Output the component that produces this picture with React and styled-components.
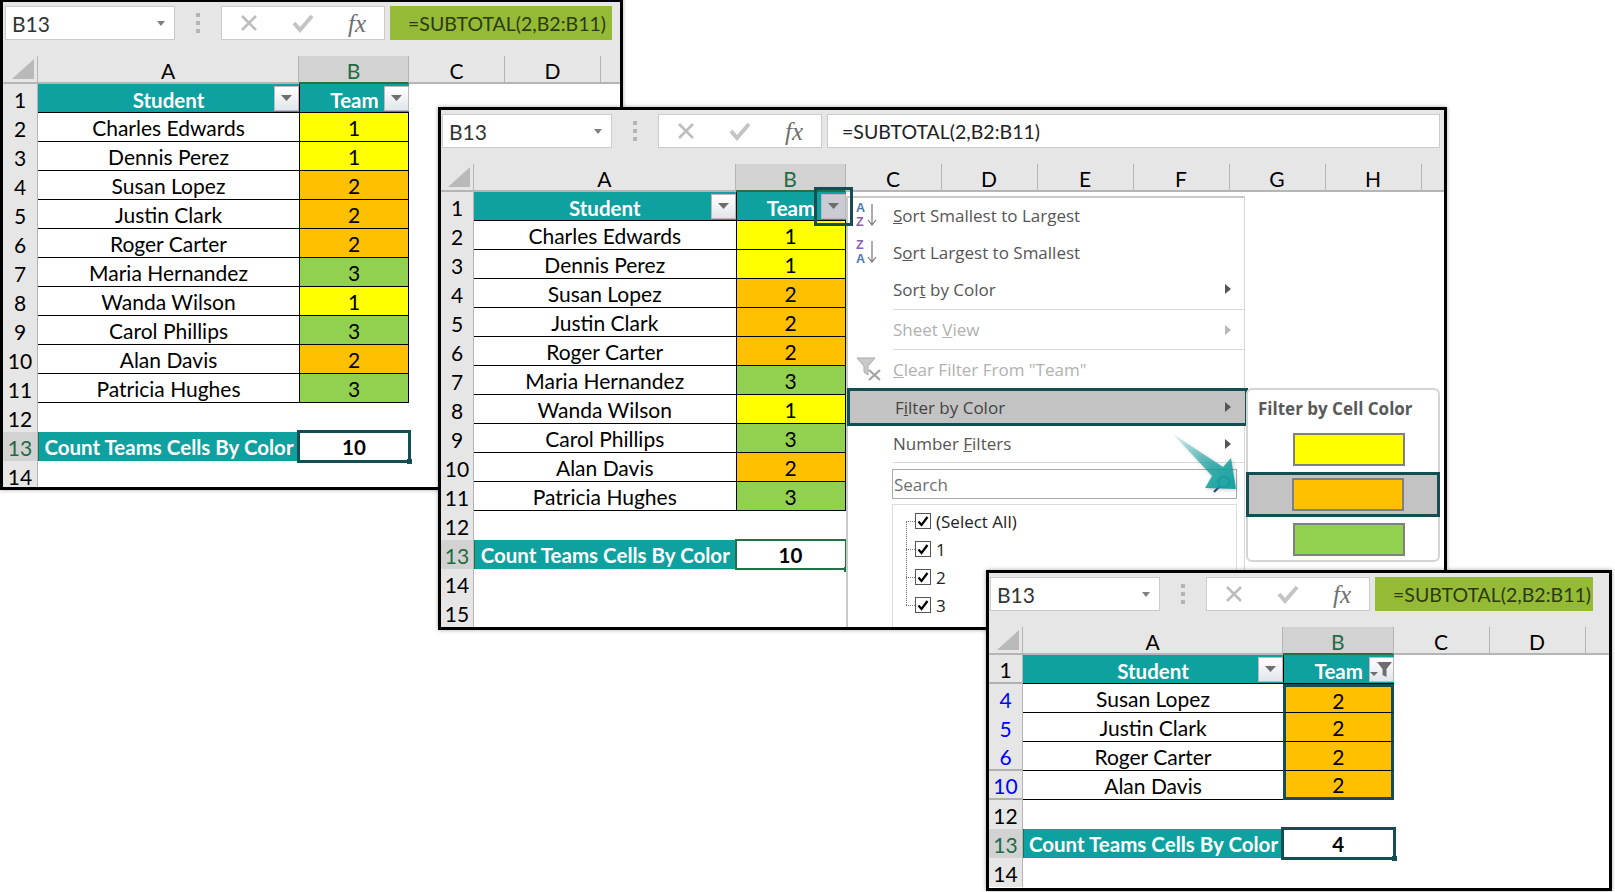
import React from "react";
import styled, { createGlobalStyle, css } from "styled-components";

const TEAL = "#0ea19f";
const DARK = "#134f52";
const TEAM_COLORS = { 1: "#ffff00", 2: "#ffc000", 3: "#92d050" };
const CELL_FONT = `"Lato", "Liberation Sans", sans-serif`;
const UI_FONT = `"Open Sans", "Noto Sans", sans-serif`;

const Global = createGlobalStyle`
  html, body { margin: 0; padding: 0; background: #fff; overflow: hidden; }
  * { box-sizing: border-box; }
`;

const Page = styled.main`
  position: relative;
  width: 1615px;
  height: 892px;
  background: #fff;
  overflow: hidden;
  font-family: ${CELL_FONT};
`;

const Window = styled.section`
  position: absolute;
  left: ${(p) => p.$x}px;
  top: ${(p) => p.$y}px;
  width: ${(p) => p.$w}px;
  height: ${(p) => p.$h}px;
  z-index: ${(p) => p.$z};
  display: flex;
  flex-direction: column;
  border: 3px solid #000;
  background: #e6e6e6;
  overflow: hidden;
  box-shadow: 0 0 4px rgba(0, 0, 0, 0.35);
`;

const FormulaRow = styled.div`
  flex: none;
  height: 54px;
  display: flex;
  align-items: flex-start;
  padding: 4px 0 0 ${(p) => p.$pad}px;
`;

const NameBox = styled.div`
  flex: none;
  width: 170px;
  height: 34px;
  display: flex;
  align-items: center;
  justify-content: space-between;
  padding: 0 9px 0 6px;
  background: #fff;
  border: 1px solid #cbcbcb;
  font-size: 21px;
  color: #333;
`;

const Caret = styled.span`
  width: 0;
  height: 0;
  border-left: 4px solid transparent;
  border-right: 4px solid transparent;
  border-top: 5px solid #808080;
`;

const GripSlot = styled.div`
  flex: none;
  width: 46px;
  height: 34px;
  display: flex;
  align-items: center;
  justify-content: center;
`;

const Grip = styled.span`
  width: 4px;
  height: 4px;
  background: #b4b4b4;
  box-shadow: 0 -8px 0 #b4b4b4, 0 8px 0 #b4b4b4;
`;

const FxButtons = styled.div`
  flex: none;
  width: 164px;
  height: 34px;
  display: grid;
  grid-template-columns: repeat(3, 1fr);
  align-items: center;
  justify-items: center;
  background: #fff;
  border: 1px solid #cbcbcb;
`;

const FxText = styled.span`
  font-family: "Liberation Serif", serif;
  font-style: italic;
  font-weight: 400;
  font-size: 25px;
  line-height: 1;
  color: #6f6f6f;
`;

const FormulaBox = styled.div`
  flex: none;
  width: ${(p) => p.$w}px;
  height: 34px;
  margin-left: 5px;
  display: flex;
  align-items: center;
  padding-left: ${(p) => (p.$green ? 17 : 14)}px;
  font-size: 19.5px;
  white-space: nowrap;
  color: ${(p) => (p.$green ? "#2c3a12" : "#222")};
  background: ${(p) => (p.$green ? "#95bb36" : "#fff")};
  border: 1px solid ${(p) => (p.$green ? "#95bb36" : "#cbcbcb")};
`;

const Grid = styled.div`
  flex: 1;
  display: grid;
  grid-template-columns: ${(p) => p.$head}px ${(p) => p.$a}px ${(p) => p.$b}px repeat(8, 96px);
  grid-template-rows: 28px;
  grid-auto-rows: 29px;
  align-content: start;
  background: #fff;
  font-size: 21px;
  color: #000;
`;

const Corner = styled.div`
  display: flex;
  align-items: flex-end;
  justify-content: flex-end;
  padding: 0 3px 3px 0;
  background: #e6e6e6;
  border-bottom: 2px solid #b5b5b5;
  border-right: 1px solid #b5b5b5;
`;

const ColHead = styled.div`
  display: flex;
  align-items: center;
  justify-content: center;
  padding-top: 3px;
  background: ${(p) => (p.$active ? "#d2d2d2" : "#e6e6e6")};
  color: ${(p) => (p.$active ? "#1f6b45" : "#000")};
  border-right: 1px solid #b5b5b5;
  border-bottom: 2px solid ${(p) => (p.$active ? "#217346" : "#b5b5b5")};
`;

const RowHead = styled.div`
  grid-column: 1;
  display: flex;
  align-items: center;
  justify-content: center;
  padding-top: 1px;
  background: ${(p) => (p.$active ? "#d2d2d2" : "#e6e6e6")};
  color: ${(p) => (p.$active ? "#1f6b45" : p.$filtered ? "#0000ff" : "#000")};
  border-right: 1px solid #b5b5b5;
  border-bottom: ${(p) => (p.$hidden ? "2px solid #b0b0b0" : "none")};
`;

const HeaderCell = styled.div`
  position: relative;
  display: flex;
  align-items: center;
  justify-content: center;
  padding-top: 3px;
  background: ${TEAL};
  color: #fff;
  font-size: 20.5px;
  font-weight: 700;
  border-bottom: 1px solid #000;
  ${(p) => p.$team && "border-left: 1px solid #000;"}
`;

const FilterButton = styled.div`
  position: absolute;
  right: 0;
  top: 2px;
  width: 25px;
  height: 25px;
  display: flex;
  align-items: center;
  justify-content: center;
  background: ${(p) => (p.$open ? "#c9ccd2" : "linear-gradient(#ffffff, #e2e5ec)")};
  border: 1px solid #b9b9b9;
  ${(p) =>
    p.$open &&
    css`
      &::after {
        content: "";
        position: absolute;
        inset: -8px;
        border: 3px solid ${DARK};
        z-index: 3;
      }
    `}
`;

const NameCell = styled.div`
  display: flex;
  align-items: center;
  justify-content: center;
  padding-top: 1px;
  background: #fff;
  border-bottom: 1px solid #000;
`;

const TeamCell = styled.div`
  display: flex;
  align-items: center;
  justify-content: center;
  padding-top: 1px;
  background: ${(p) => TEAM_COLORS[p.$team]};
  border-bottom: 1px solid #000;
  border-left: 1px solid #000;
  border-right: 1px solid #000;
  ${(p) =>
    p.$picked &&
    css`
      border-left: 3px solid ${DARK};
      border-right: 3px solid ${DARK};
    `}
  ${(p) => p.$first && `border-top: 3px solid ${DARK};`}
  ${(p) => p.$last && `border-bottom: 3px solid ${DARK};`}
`;

const TotalLabel = styled.div`
  display: flex;
  align-items: center;
  justify-content: center;
  background: ${TEAL};
  color: #fff;
  font-size: 20.5px;
  font-weight: 700;
  white-space: nowrap;
  border-left: 1px solid #217346;
`;

const TotalValue = styled.div`
  position: relative;
  display: flex;
  align-items: center;
  justify-content: center;
  font-size: 20.5px;
  font-weight: 700;
  &::before {
    content: "";
    position: absolute;
    inset: ${(p) => (p.$thin ? "-1px" : "-2px")};
    border: ${(p) => (p.$thin ? "2px solid #217346" : `3px solid ${DARK}`)};
  }
  &::after {
    content: "";
    position: absolute;
    right: -3px;
    bottom: -3px;
    width: 5px;
    height: 5px;
    background: ${(p) => (p.$thin ? "#217346" : DARK)};
  }
`;

const Menu = styled.div`
  position: absolute;
  left: 405px;
  top: 86px;
  width: 399px;
  height: 440px;
  display: flex;
  flex-direction: column;
  padding-top: 1px;
  background: #fff;
  border-left: 2px solid #c9c9c9;
  border-top: 2px solid #c9c9c9;
  border-right: 1px solid #d6d6d6;
  z-index: 2;
  font-family: ${UI_FONT};
  font-size: 17px;
  color: #555;
`;

const MenuItem = styled.div`
  flex: none;
  height: 37px;
  display: flex;
  align-items: center;
  padding-bottom: ${(p) => p.$lift ?? 5}px;
  color: ${(p) => (p.$off ? "#b1b1b1" : "#555")};
`;

const ActiveItem = styled(MenuItem)`
  height: 38px;
  margin: -2px -4px 0 -1px;
  padding-bottom: 0;
  background: #c3c3c3;
  border: 3px solid ${DARK};
  color: #444;
`;

const IconSlot = styled.span`
  flex: none;
  width: 45px;
  display: flex;
  align-items: center;
  justify-content: flex-start;
  gap: 2px;
  padding-left: 8px;
`;

const SortLetters = styled.span`
  display: flex;
  flex-direction: column;
  font-family: "Liberation Sans", sans-serif;
  font-weight: 700;
  font-size: 12.5px;
  line-height: 14.5px;
`;

const SortLetter = styled.span`
  color: ${(p) => p.$c};
`;

const MenuArrow = styled.span`
  margin-left: auto;
  margin-right: ${(p) => p.$mr || 13}px;
  width: 0;
  height: 0;
  border-top: 5px solid transparent;
  border-bottom: 5px solid transparent;
  border-left: 6px solid ${(p) => (p.$off ? "#b9b9b9" : "#555")};
`;

const MenuRule = styled.div`
  flex: none;
  height: 1px;
  margin: -1px 0 3px 45px;
  background: #d9d9d9;
`;

const SearchBox = styled.div`
  flex: none;
  width: 345px;
  height: 30px;
  margin: 3px 0 0 44px;
  display: flex;
  align-items: center;
  justify-content: space-between;
  padding: 0 4px 0 1px;
  border: 1px solid #ababab;
  color: #6f6f6f;
`;

const TreeBox = styled.div`
  flex: none;
  width: 345px;
  height: 160px;
  margin: 5px 0 0 44px;
  padding: 2px 0 0 22px;
  border: 1px solid #dcdcdc;
  color: #222;
`;

const TreeRow = styled.div`
  position: relative;
  height: 28px;
  display: flex;
  align-items: center;
  gap: 5px;
  &::before {
    content: "";
    position: absolute;
    left: -9px;
    top: 50%;
    width: 9px;
    border-top: 1px dotted #777;
  }
  &::after {
    content: "";
    position: absolute;
    left: -9px;
    top: ${(p) => (p.$first ? "50%" : "-50%")};
    height: 100%;
    border-left: 1px dotted #777;
    display: ${(p) => (p.$first ? "none" : "block")};
  }
`;

const CheckBox = styled.span`
  width: 16px;
  height: 16px;
  display: flex;
  align-items: center;
  justify-content: center;
  border: 1px solid #555;
  background: #fff;
`;

const Submenu = styled.div`
  position: absolute;
  left: 805px;
  top: 278px;
  width: 194px;
  height: 174px;
  display: flex;
  flex-direction: column;
  background: #fff;
  border: 2px solid #d4d4d4;
  border-radius: 6px;
  z-index: 2;
  font-family: ${UI_FONT};
`;

const SubmenuTitle = styled.div`
  flex: none;
  height: 37px;
  display: flex;
  align-items: center;
  padding-left: 10px;
  font-size: 17px;
  font-weight: 700;
  color: #595959;
  white-space: nowrap;
`;

const SwatchRow = styled.div`
  flex: none;
  height: 45px;
  display: flex;
  align-items: center;
  padding-left: ${(p) => (p.$active ? 43 : 45)}px;
  ${(p) =>
    p.$active &&
    css`
      margin: 0 -2px 0 -2px;
      background: #c3c3c3;
      border: 3px solid ${DARK};
    `}
`;

const Swatch = styled.div`
  width: 112px;
  height: 33px;
  background: ${(p) => p.$c};
  border: 2px solid #808080;
`;

const PointerLayer = styled.svg`
  position: absolute;
  left: 1165px;
  top: 425px;
  z-index: 5;
  filter: drop-shadow(1px 1px 2px rgba(0, 0, 0, 0.25));
`;

const CloseIcon = () => (
  <svg width="20" height="20" viewBox="0 0 20 20">
    <path d="M3 3 L17 17 M17 3 L3 17" stroke="#bdbdbd" strokeWidth="2.6" fill="none" />
  </svg>
);

const TickIcon = () => (
  <svg width="22" height="20" viewBox="0 0 22 20">
    <path d="M2 10 L8 17 L20 3" stroke="#c4c4c4" strokeWidth="4" fill="none" />
  </svg>
);

const CornerMark = () => (
  <svg width="22" height="20" viewBox="0 0 22 20">
    <path d="M0 20 L22 0 L22 20 Z" fill="#b9b9b9" />
  </svg>
);

const DownTriangle = () => (
  <svg width="11" height="7" viewBox="0 0 11 7">
    <path d="M0 0 H11 L5.5 6 Z" fill="#6e6e6e" />
  </svg>
);

const FilterOnIcon = () => (
  <svg width="23" height="18" viewBox="0 0 23 18">
    <path d="M7 1 H22 L16.5 8 V16 L12.5 14 V8 Z" fill="#6e6e6e" />
    <path d="M0 11 H8 L4 15 Z" fill="#6e6e6e" />
  </svg>
);

const ThinDown = () => (
  <svg width="10" height="22" viewBox="0 0 10 22">
    <path d="M5 0 V20 M1 16 L5 21 L9 16" stroke="#777" strokeWidth="1.2" fill="none" />
  </svg>
);

const ClearFilterIcon = () => (
  <svg width="26" height="24" viewBox="0 0 26 24">
    <path d="M1 1 H19 L12 9 V18 L8 15 V9 Z" fill="#c9c9c9" stroke="#a9a9a9" />
    <path d="M13 13 L24 23 M24 13 L13 23" stroke="#a2a2a2" strokeWidth="2.2" />
  </svg>
);

const SearchIcon = () => (
  <svg width="20" height="20" viewBox="0 0 20 20">
    <circle cx="12" cy="8" r="5.5" stroke="#5e86a8" strokeWidth="1.6" fill="none" />
    <path d="M8 12 L2 18" stroke="#2f5597" strokeWidth="2.4" />
  </svg>
);

const TinyCheck = () => (
  <svg width="12" height="12" viewBox="0 0 12 12">
    <path d="M1.5 6.5 L4.5 10 L10.5 2" stroke="#000" strokeWidth="2.2" fill="none" />
  </svg>
);

const ALL_ROWS = [
  [2, "Charles Edwards", 1],
  [3, "Dennis Perez", 1],
  [4, "Susan Lopez", 2],
  [5, "Justin Clark", 2],
  [6, "Roger Carter", 2],
  [7, "Maria Hernandez", 3],
  [8, "Wanda Wilson", 1],
  [9, "Carol Phillips", 3],
  [10, "Alan Davis", 2],
  [11, "Patricia Hughes", 3],
];
const ORANGE_ROWS = ALL_ROWS.filter((r) => r[2] === 2);

function Sheet({ frame, pad, head, a, b, formulaW, green, cols, rows, filtered, total, thin, blanks, menuOpen, children }) {
  const spare = Array.from({ length: 8 - cols.length }, (_, i) => "spare" + i);
  return (
    <Window $x={frame[0]} $y={frame[1]} $w={frame[2]} $h={frame[3]} $z={frame[4]}>
      <FormulaRow $pad={pad}>
        <NameBox>
          B13
          <Caret />
        </NameBox>
        <GripSlot>
          <Grip />
        </GripSlot>
        <FxButtons>
          <CloseIcon />
          <TickIcon />
          <FxText>fx</FxText>
        </FxButtons>
        <FormulaBox $w={formulaW} $green={green}>
          =SUBTOTAL(2,B2:B11)
        </FormulaBox>
      </FormulaRow>
      <Grid $head={head} $a={a} $b={b}>
        <Corner>
          <CornerMark />
        </Corner>
        <ColHead>A</ColHead>
        <ColHead $active>B</ColHead>
        {cols.map((c) => (
          <ColHead key={c}>{c}</ColHead>
        ))}
        {spare.map((c) => (
          <ColHead key={c} />
        ))}

        <RowHead $hidden={filtered}>1</RowHead>
        <HeaderCell>
          Student
          <FilterButton>
            <DownTriangle />
          </FilterButton>
        </HeaderCell>
        <HeaderCell $team>
          Team
          <FilterButton $open={menuOpen}>{filtered ? <FilterOnIcon /> : <DownTriangle />}</FilterButton>
        </HeaderCell>

        {rows.map(([n, name, team], i) => (
          <React.Fragment key={n}>
            <RowHead $filtered={filtered} $hidden={filtered && (n === 6 || n === 10)}>
              {n}
            </RowHead>
            <NameCell>{name}</NameCell>
            <TeamCell $team={team} $picked={filtered} $first={filtered && i === 0} $last={filtered && i === rows.length - 1}>
              {team}
            </TeamCell>
          </React.Fragment>
        ))}

        <RowHead>12</RowHead>
        <RowHead $active>13</RowHead>
        <TotalLabel>Count Teams Cells By Color</TotalLabel>
        <TotalValue $thin={thin}>{total}</TotalValue>
        {blanks.map((n) => (
          <RowHead key={n}>{n}</RowHead>
        ))}
      </Grid>
      {children}
    </Window>
  );
}

function FilterMenu() {
  return (
    <Menu>
      <MenuItem>
        <IconSlot>
          <SortLetters>
            <SortLetter $c="#4a7ab5">A</SortLetter>
            <SortLetter $c="#8a5fb0">Z</SortLetter>
          </SortLetters>
          <ThinDown />
        </IconSlot>
        <span>
          <u>S</u>ort Smallest to Largest
        </span>
      </MenuItem>
      <MenuItem>
        <IconSlot>
          <SortLetters>
            <SortLetter $c="#8a5fb0">Z</SortLetter>
            <SortLetter $c="#4a7ab5">A</SortLetter>
          </SortLetters>
          <ThinDown />
        </IconSlot>
        <span>
          S<u>o</u>rt Largest to Smallest
        </span>
      </MenuItem>
      <MenuItem>
        <IconSlot />
        <span>
          Sor<u>t</u> by Color
        </span>
        <MenuArrow />
      </MenuItem>
      <MenuRule />
      <MenuItem $off $lift={4}>
        <IconSlot />
        <span>
          Sheet <u>V</u>iew
        </span>
        <MenuArrow $off />
      </MenuItem>
      <MenuRule />
      <MenuItem $off>
        <IconSlot>
          <ClearFilterIcon />
        </IconSlot>
        <span>
          <u>C</u>lear Filter From "Team"
        </span>
      </MenuItem>
      <ActiveItem>
        <IconSlot />
        <span>
          F<u>i</u>lter by Color
        </span>
        <MenuArrow $mr={14} />
      </ActiveItem>
      <MenuItem $lift={2}>
        <IconSlot />
        <span>
          Number <u>F</u>ilters
        </span>
        <MenuArrow />
      </MenuItem>
      <MenuRule />
      <SearchBox>
        Search
        <SearchIcon />
      </SearchBox>
      <TreeBox>
        {["(Select All)", "1", "2", "3"].map((t, i) => (
          <TreeRow key={t} $first={i === 0}>
            <CheckBox>
              <TinyCheck />
            </CheckBox>
            {t}
          </TreeRow>
        ))}
      </TreeBox>
    </Menu>
  );
}

function CellColorMenu() {
  return (
    <Submenu>
      <SubmenuTitle>Filter by Cell Color</SubmenuTitle>
      <SwatchRow>
        <Swatch $c="#ffff00" />
      </SwatchRow>
      <SwatchRow $active>
        <Swatch $c="#ffc000" />
      </SwatchRow>
      <SwatchRow>
        <Swatch $c="#92d050" />
      </SwatchRow>
    </Submenu>
  );
}

export default function App() {
  return (
    <Page>
      <Global />
      <Sheet
        frame={[0, -1, 623, 491, 1]}
        pad={2}
        head={35}
        a={261}
        b={110}
        formulaW={222}
        green
        cols={["C", "D"]}
        rows={ALL_ROWS}
        total={10}
        blanks={[14]}
      />
      <Sheet
        frame={[438, 107, 1009, 523, 2]}
        pad={1}
        head={33}
        a={261.5}
        b={110}
        formulaW={613}
        cols={["C", "D", "E", "F", "G", "H"]}
        rows={ALL_ROWS}
        total={10}
        thin
        blanks={[14, 15]}
        menuOpen
      >
        <FilterMenu />
        <CellColorMenu />
      </Sheet>
      <PointerLayer width="80" height="72" viewBox="0 0 80 72">
        <defs>
          <linearGradient id="pointerFade" x1="0" y1="0" x2="1" y2="1">
            <stop offset="0" stopColor="#0ea19f" stopOpacity="0.12" />
            <stop offset="0.65" stopColor="#0ea19f" stopOpacity="0.8" />
            <stop offset="1" stopColor="#0ea19f" stopOpacity="0.95" />
          </linearGradient>
        </defs>
        <path d="M8 9 L58 42 L66 33 L71 64 L40 63 L47 51 Z" fill="url(#pointerFade)" />
      </PointerLayer>
      <Sheet
        frame={[986, 570, 626, 321, 6]}
        pad={1}
        head={34}
        a={260}
        b={110.5}
        formulaW={218}
        green
        cols={["C", "D"]}
        rows={ORANGE_ROWS}
        filtered
        total={4}
        blanks={[14]}
      />
    </Page>
  );
}
